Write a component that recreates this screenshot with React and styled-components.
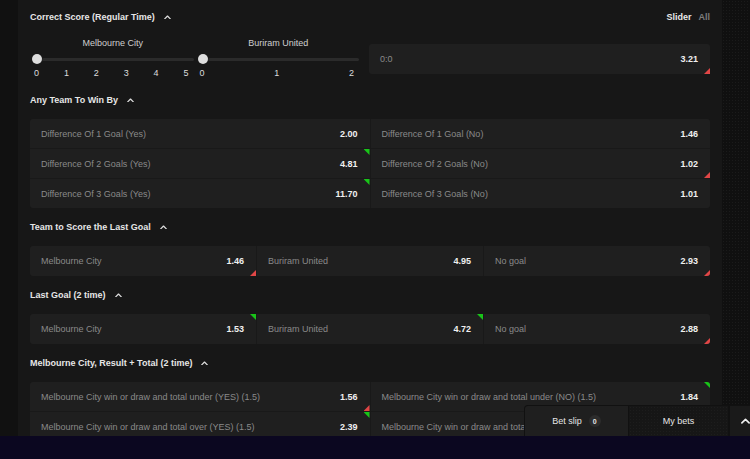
import React from 'react';
import styled, { createGlobalStyle } from 'styled-components';

const GlobalStyle = createGlobalStyle`
  html, body {
    margin: 0;
    padding: 0;
    background: #111111;
  }
  body {
    font-family: 'Liberation Sans', Arial, sans-serif;
    -webkit-font-smoothing: antialiased;
  }
`;

const Screen = styled.div`
  position: relative;
  width: 750px;
  height: 459px;
  display: flex;
  flex-direction: column;
  overflow: hidden;
`;

const Body = styled.div`
  display: flex;
  height: 436px;
`;

const LeftRail = styled.div`
  width: 18px;
  background: #111111;
`;

const Main = styled.div`
  flex: 1;
  background: #171717;
  padding: 0 12px;
  overflow: hidden;
`;

const RightRail = styled.div`
  width: 28px;
  background-color: #101010;
  background-image: radial-gradient(#1b1b1b 0.8px, transparent 0.9px);
  background-size: 3px 3px;
`;

const Footer = styled.div`
  height: 23px;
  background: #0b0720;
`;

const Header = styled.div`
  display: flex;
  align-items: center;
  justify-content: space-between;
  height: ${p => (p.$first ? 34 : 38)}px;
  font-size: 9px;
  font-weight: 700;
  color: #e6e6e6;
`;

const Title = styled.div`
  display: flex;
  align-items: center;
  gap: 9px;
`;

const ViewSwitch = styled.div`
  display: flex;
  gap: 7px;
`;

const ViewOption = styled.span`
  color: ${p => (p.$active ? '#e8e8e8' : '#7d7d7d')};
`;

const ScoreBlock = styled.div`
  display: grid;
  grid-template-columns: 339px 1fr;
  padding-bottom: 1px;
`;

const Sliders = styled.div`
  display: grid;
  grid-template-columns: 1fr 1fr;
  column-gap: 4px;
  padding: 0 10px 0 2px;
`;

const Slider = styled.div`
  display: flex;
  flex-direction: column;
`;

const SliderLabel = styled.div`
  height: 18px;
  line-height: 18px;
  text-align: center;
  font-size: 9px;
  color: #cfcfcf;
`;

const TrackRow = styled.div`
  display: flex;
  align-items: center;
  height: 14px;
`;

const Knob = styled.div`
  width: 10px;
  height: 10px;
  border-radius: 50%;
  background: #dedede;
  flex-shrink: 0;
`;

const Track = styled.div`
  flex: 1;
  height: 3px;
  border-radius: 2px;
  background: #2b2b2b;
`;

const Ticks = styled.div`
  display: flex;
  justify-content: space-between;
  height: 14px;
  line-height: 14px;
  padding: 0 5px 0 2px;
  font-size: 9px;
  color: #dddddd;
`;

const Market = styled.div`
  display: grid;
  grid-template-columns: repeat(${p => p.$cols}, 1fr);
  gap: 1px;
  background: #191919;
  border-radius: 3px;
  overflow: hidden;
`;

const Cell = styled.div`
  position: relative;
  display: flex;
  align-items: center;
  justify-content: space-between;
  height: ${p => p.$h || 30}px;
  padding: 0 12px 0 11px;
  background: #1f1f1f;
  font-size: 9px;
  border-radius: ${p => (p.$round ? '3px' : '0')};
  margin-top: ${p => p.$offset || 0}px;
`;

const Name = styled.span`
  color: #8a8a8a;
  white-space: nowrap;
`;

const Odd = styled.span`
  color: #f0f0f0;
  font-weight: 700;
`;

const Flag = styled.span`
  position: absolute;
  right: 0;
  width: 6px;
  height: 6px;
  ${p => (p.$up ? 'top: 0;' : 'bottom: 0;')}
  background: ${p => (p.$up ? '#19c419' : '#e04646')};
  clip-path: ${p =>
    p.$up ? 'polygon(0 0, 100% 0, 100% 100%)' : 'polygon(100% 0, 100% 100%, 0 100%)'};
`;

const BetBar = styled.div`
  position: absolute;
  right: 0;
  bottom: 23px;
  display: flex;
  height: 31px;
  width: 226px;
  gap: 1px;
  box-sizing: border-box;
  border-top: 1px solid #111111;
  border-left: 1px solid #111111;
  background: #111111;
  border-top-left-radius: 4px;
  overflow: hidden;
`;

const BetTab = styled.div`
  width: 103px;
  display: flex;
  align-items: center;
  justify-content: center;
  gap: 7px;
  background: #1f1f1f;
  color: #e6e6e6;
  font-size: 9px;
`;

const Badge = styled.span`
  width: 12px;
  height: 12px;
  border-radius: 50%;
  background: #2c2c2c;
  font-size: 7px;
  font-weight: 700;
  display: flex;
  align-items: center;
  justify-content: center;
`;

const MyBets = styled.div`
  width: 99px;
  display: flex;
  align-items: center;
  justify-content: center;
  background-color: #161616;
  background-image: radial-gradient(#1d1d1d 0.8px, transparent 0.9px);
  background-size: 3px 3px;
  color: #e6e6e6;
  font-size: 9px;
`;

const Toggle = styled.div`
  flex: 1;
  margin-left: 1px;
  display: flex;
  align-items: center;
  padding-left: 11px;
  background: #1a1a1a;
`;

const Chevron = ({ size = 7, color = '#dcdcdc' }) => (
  <svg width={size} height={size * 0.65} viewBox="0 0 10 6.5" fill="none">
    <path d="M1 5.5 L5 1.5 L9 5.5" stroke={color} strokeWidth="1.8" strokeLinecap="round" strokeLinejoin="round" />
  </svg>
);

const Outcome = ({ name, odd, flag, h }) => (
  <Cell $h={h}>
    <Name>{name}</Name>
    {odd && <Odd>{odd}</Odd>}
    {flag && <Flag $up={flag === 'up'} />}
  </Cell>
);

const Section = ({ title, first, right, children }) => (
  <>
    <Header $first={first}>
      <Title>
        {title}
        <Chevron />
      </Title>
      {right}
    </Header>
    {children}
  </>
);

const winBy = [
  ['Difference Of 1 Goal (Yes)', '2.00'],
  ['Difference Of 1 Goal (No)', '1.46'],
  ['Difference Of 2 Goals (Yes)', '4.81', 'up'],
  ['Difference Of 2 Goals (No)', '1.02', 'down'],
  ['Difference Of 3 Goals (Yes)', '11.70', 'up'],
  ['Difference Of 3 Goals (No)', '1.01'],
];

const lastScorer = [
  ['Melbourne City', '1.46', 'down'],
  ['Buriram United', '4.95'],
  ['No goal', '2.93', 'down'],
];

const lastGoal = [
  ['Melbourne City', '1.53', 'up'],
  ['Buriram United', '4.72', 'up'],
  ['No goal', '2.88', 'down'],
];

// last cell sits under the bet slip bar, only its start shows
const resultTotal = [
  ['Melbourne City win or draw and total under (YES) (1.5)', '1.56', 'down'],
  ['Melbourne City win or draw and total under (NO) (1.5)', '1.84', 'up'],
  ['Melbourne City win or draw and total over (YES) (1.5)', '2.39', 'up'],
  ['Melbourne City win or draw and tota'],
];

export default function App() {
  return (
    <Screen>
      <GlobalStyle />
      <Body>
        <LeftRail />
        <Main>
          <Section
            first
            title="Correct Score (Regular Time)"
            right={
              <ViewSwitch>
                <ViewOption $active>Slider</ViewOption>
                <ViewOption>All</ViewOption>
              </ViewSwitch>
            }
          >
            <ScoreBlock>
              <Sliders>
                <Slider>
                  <SliderLabel>Melbourne City</SliderLabel>
                  <TrackRow>
                    <Knob />
                    <Track />
                  </TrackRow>
                  <Ticks>
                    {[0, 1, 2, 3, 4, 5].map(n => <span key={n}>{n}</span>)}
                  </Ticks>
                </Slider>
                <Slider>
                  <SliderLabel>Buriram United</SliderLabel>
                  <TrackRow>
                    <Knob />
                    <Track />
                  </TrackRow>
                  <Ticks>
                    {[0, 1, 2].map(n => <span key={n}>{n}</span>)}
                  </Ticks>
                </Slider>
              </Sliders>
              <div>
                <Cell $round $offset={10}>
                  <Name>0:0</Name>
                  <Odd>3.21</Odd>
                  <Flag />
                </Cell>
              </div>
            </ScoreBlock>
          </Section>

          <Section title="Any Team To Win By">
            <Market $cols={2}>
              {winBy.map(([n, o, f]) => (
                <Outcome key={n} name={n} odd={o} flag={f} h={29} />
              ))}
            </Market>
          </Section>

          <Section title="Team to Score the Last Goal">
            <Market $cols={3}>
              {lastScorer.map(([n, o, f]) => (
                <Outcome key={n} name={n} odd={o} flag={f} />
              ))}
            </Market>
          </Section>

          <Section title="Last Goal (2 time)">
            <Market $cols={3}>
              {lastGoal.map(([n, o, f]) => (
                <Outcome key={n} name={n} odd={o} flag={f} />
              ))}
            </Market>
          </Section>

          <Section title="Melbourne City, Result + Total (2 time)">
            <Market $cols={2}>
              {resultTotal.map(([n, o, f]) => (
                <Outcome key={n} name={n} odd={o} flag={f} h={29} />
              ))}
            </Market>
          </Section>
        </Main>
        <RightRail />
      </Body>
      <Footer />
      <BetBar>
        <BetTab>
          Bet slip
          <Badge>0</Badge>
        </BetTab>
        <MyBets>My bets</MyBets>
        <Toggle>
          <Chevron size={9} color="#f0f0f0" />
        </Toggle>
      </BetBar>
    </Screen>
  );
}
